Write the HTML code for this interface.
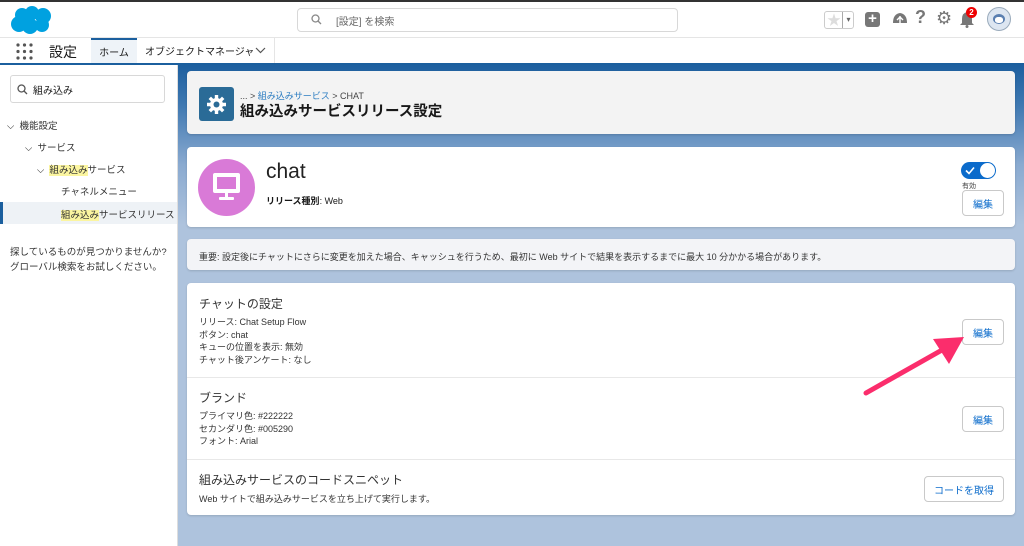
<!DOCTYPE html>
<html><head><meta charset="utf-8"><style>
*{box-sizing:border-box;margin:0;padding:0}
body{width:1024px;height:546px;overflow:hidden;font-family:"Liberation Sans","Noto Sans CJK JP",sans-serif;color:#181818;background:#fff;position:relative;font-size:10px}
.abs{position:absolute}
.btn{position:absolute;background:#fff;border:1px solid #c9c9c9;border-radius:4px;color:#0b6bcb;font-size:10px;display:flex;align-items:center;justify-content:center;height:26px}
.card{position:absolute;left:187px;width:828px;border-radius:4px;box-shadow:0 1px 2px rgba(0,0,0,.15)}
</style></head><body>
<div class="abs" style="left:0;top:0;width:1024px;height:2px;background:#333"></div>
<svg class="abs" style="left:10px;top:5px" width="44" height="30" viewBox="0 0 44 30"><g fill="#00a1e0"><circle cx="12" cy="10" r="7"/><circle cx="22" cy="8" r="7"/><circle cx="33" cy="11" r="8"/><circle cx="9" cy="19" r="8"/><circle cx="20" cy="21" r="8"/><circle cx="32" cy="20" r="7"/></g></svg>
<div class="abs" style="left:297px;top:8px;width:381px;height:24px;border:1px solid #d8d8d8;border-radius:4px;color:#666;font-size:10px;display:flex;align-items:center;padding-left:38px">[設定] を検索</div>
<svg class="abs" style="left:311px;top:14px" width="11" height="11"><circle cx="4.5" cy="4.5" r="3.5" fill="none" stroke="#888" stroke-width="1.3"/><path d="M7 7l3 3" stroke="#888" stroke-width="1.3"/></svg>
<div class="abs" style="left:824px;top:11px;width:30px;height:18px;border:1px solid #ccc;border-radius:3px"><span style="position:absolute;left:2px;top:0;color:#ddd;font-size:14px;line-height:16px">★</span><span style="position:absolute;left:17px;top:0;width:12px;height:16px;border-left:1px solid #aaa;color:#666;font-size:8px;line-height:16px;text-align:center">▾</span></div>
<div class="abs" style="left:865px;top:12px;width:15px;height:15px;border-radius:3px;background:#777;color:#fff;font-size:15px;line-height:14px;text-align:center;font-weight:bold">+</div>
<svg class="abs" style="left:891px;top:11px" width="18" height="16"><path d="M2 12 Q2 3 9 2 Q16 3 16 12 Z" fill="#777"/><path d="M9 5v9M6 9l3-3 3 3" stroke="#fff" stroke-width="1.4" fill="none"/></svg>
<div class="abs" style="left:915px;top:7px;color:#777;font-size:18px;font-weight:bold">?</div>
<div class="abs" style="left:936px;top:8px;color:#777;font-size:18px">⚙</div>
<svg class="abs" style="left:960px;top:11px" width="14" height="17"><path d="M7 1Q2 2 2 8V12L0 14H14L12 12V8Q12 2 7 1Z" fill="#777"/><circle cx="7" cy="15.5" r="1.5" fill="#777"/></svg>
<div class="abs" style="left:966px;top:7px;width:11px;height:11px;border-radius:50%;background:#e00;color:#fff;font-size:8px;line-height:11px;text-align:center;font-weight:bold">2</div>
<div class="abs" style="left:987px;top:7px;width:24px;height:24px;border-radius:50%;background:#dde6f1;border:1px solid #9ab"><div style="position:absolute;left:5px;top:6px;width:12px;height:10px;border-radius:50%;background:#5a7fb0"></div><div style="position:absolute;left:7px;top:9px;width:8px;height:6px;border-radius:40%;background:#fff"></div></div>
<div class="abs" style="left:0;top:37px;width:1024px;height:1px;background:#e5e5e5"></div>
<svg class="abs" style="left:16px;top:43px" width="17" height="17"><g fill="#555"><circle cx="2" cy="2" r="1.6"/><circle cx="8.5" cy="2" r="1.6"/><circle cx="15" cy="2" r="1.6"/><circle cx="2" cy="8.5" r="1.6"/><circle cx="8.5" cy="8.5" r="1.6"/><circle cx="15" cy="8.5" r="1.6"/><circle cx="2" cy="15" r="1.6"/><circle cx="8.5" cy="15" r="1.6"/><circle cx="15" cy="15" r="1.6"/></g></svg>
<div class="abs" style="left:49px;top:42px;font-size:14px">設定</div>
<div class="abs" style="left:91px;top:38px;width:46px;height:25px;background:#eef3f8;border-top:2px solid #1b5f9e;font-size:10px;display:flex;align-items:center;justify-content:center">ホーム</div>
<div class="abs" style="left:145px;top:38px;height:25px;font-size:10px;display:flex;align-items:center">オブジェクトマネージャ</div>
<svg class="abs" style="left:255px;top:47px" width="11" height="8"><path d="M1 1l4.5 4.5L10 1" stroke="#555" fill="none" stroke-width="1.2"/></svg>
<div class="abs" style="left:274px;top:38px;width:1px;height:25px;background:#e5e5e5"></div>
<div class="abs" style="left:0;top:63px;width:1024px;height:2px;background:#1b5f9e"></div>
<div class="abs" style="left:177px;top:65px;width:847px;height:481px;background:linear-gradient(#1d5f9f 0,#3f78b1 40px,#8aaad0 100px,#aec3dd 160px,#aec3dd 100%)"></div>
<div class="abs" style="left:177px;top:65px;width:1px;height:481px;background:#ddd"></div>
<div class="abs" style="left:10px;top:75px;width:155px;height:28px;border:1px solid #d8d8d8;border-radius:3px;font-size:10px;display:flex;align-items:center;padding-left:22px">組み込み</div>
<svg class="abs" style="left:17px;top:84px" width="11" height="11"><circle cx="4.5" cy="4.5" r="3.5" fill="none" stroke="#555" stroke-width="1.3"/><path d="M7 7l3 3" stroke="#555" stroke-width="1.3"/></svg>
<div class="abs" style="left:7px;top:118px;font-size:9.5px;color:#333">⌵&nbsp;&nbsp;機能設定</div>
<div class="abs" style="left:25px;top:140px;font-size:9.5px;color:#333">⌵&nbsp;&nbsp;サービス</div>
<div class="abs" style="left:37px;top:162px;font-size:9.5px;color:#333">⌵&nbsp;&nbsp;<span style="background:#fbf5a0">組み込み</span>サービス</div>
<div class="abs" style="left:61px;top:184px;font-size:9.5px;color:#333">チャネルメニュー</div>
<div class="abs" style="left:0;top:202px;width:177px;height:22px;background:#eef2f6;border-left:3px solid #1b5f9e"></div>
<div class="abs" style="left:61px;top:207px;font-size:9.5px;color:#333"><span style="background:#fbf5a0">組み込み</span>サービスリリース</div>
<div class="abs" style="left:10px;top:245px;font-size:9.5px;color:#333;line-height:15px">探しているものが見つかりませんか?<br>グローバル検索をお試しください。</div>
<div class="card" style="top:71px;height:63px;background:#f3f3f3"></div>
<div class="abs" style="left:199px;top:87px;width:35px;height:34px;border-radius:3px;background:#2a6b97"></div>
<svg class="abs" style="left:206px;top:94px" width="21" height="21" viewBox="0 0 21 21"><g fill="#fff"><circle cx="10.5" cy="10.5" r="6.5"/><g stroke="#fff" stroke-width="3.4"><path d="M10.5 1v19M1 10.5h19M3.8 3.8l13.4 13.4M17.2 3.8L3.8 17.2"/></g></g><circle cx="10.5" cy="10.5" r="3" fill="#2a6b97"/></svg>
<div class="abs" style="left:240px;top:89px;font-size:9px;color:#444">... &gt; <span style="color:#2b7cc1">組み込みサービス</span> &gt; CHAT</div>
<div class="abs" style="left:240px;top:100px;font-size:14.5px;font-weight:bold">組み込みサービスリリース設定</div>
<div class="card" style="top:147px;height:80px;background:#fff"></div>
<div class="abs" style="left:198px;top:159px;width:57px;height:57px;border-radius:50%;background:#d97ad7"></div>
<svg class="abs" style="left:211px;top:172px" width="31" height="31"><rect x="2" y="1" width="27" height="20" rx="2" fill="#fff"/><rect x="6" y="5" width="19" height="12" fill="#d97ad7"/><rect x="14" y="21" width="3" height="5" fill="#fff"/><rect x="8" y="25" width="15" height="3" rx="1" fill="#fff"/></svg>
<div class="abs" style="left:266px;top:160px;font-size:21px;color:#222">chat</div>
<div class="abs" style="left:266px;top:194px;font-size:9px"><b>リリース種別</b>: Web</div>
<div class="abs" style="left:961px;top:162px;width:35px;height:17px;border-radius:9px;background:#0b6bcb"><svg style="position:absolute;left:4px;top:4px" width="10" height="9"><path d="M1 4.5l3 3 5-6" stroke="#fff" stroke-width="1.6" fill="none"/></svg><div style="position:absolute;right:1px;top:1px;width:15px;height:15px;border-radius:50%;background:#fff"></div></div>
<div class="abs" style="left:962px;top:181px;font-size:7px;color:#444">有効</div>
<div class="btn" style="left:962px;top:190px;width:42px">編集</div>
<div class="card" style="top:239px;height:31px;background:#f3f4f7"></div>
<div class="abs" style="left:199px;top:250px;font-size:9px;color:#333">重要: 設定後にチャットにさらに変更を加えた場合、キャッシュを行うため、最初に Web サイトで結果を表示するまでに最大 10 分かかる場合があります。</div>
<div class="card" style="top:283px;height:232px;background:#fff"></div>
<div class="abs" style="left:187px;top:377px;width:828px;height:1px;background:#e8e8e8"></div>
<div class="abs" style="left:187px;top:459px;width:828px;height:1px;background:#e8e8e8"></div>
<div class="abs" style="left:199px;top:295px;font-size:12px;color:#333">チャットの設定</div>
<div class="abs" style="left:199px;top:316px;font-size:9px;color:#333;line-height:12.5px">リリース: Chat Setup Flow<br>ボタン: chat<br>キューの位置を表示: 無効<br>チャット後アンケート: なし</div>
<div class="btn" style="left:962px;top:319px;width:42px">編集</div>
<div class="abs" style="left:199px;top:389px;font-size:12px;color:#333">ブランド</div>
<div class="abs" style="left:199px;top:410px;font-size:9px;color:#333;line-height:12.5px">プライマリ色: #222222<br>セカンダリ色: #005290<br>フォント: Arial</div>
<div class="btn" style="left:962px;top:406px;width:42px">編集</div>
<div class="abs" style="left:199px;top:471px;font-size:12px;color:#333">組み込みサービスのコードスニペット</div>
<div class="abs" style="left:199px;top:492px;font-size:9px;color:#333">Web サイトで組み込みサービスを立ち上げて実行します。</div>
<div class="btn" style="left:924px;top:476px;width:80px">コードを取得</div>
<svg class="abs" style="left:860px;top:330px" width="110" height="70"><path d="M6 63L82 20" stroke="#fb2d6c" stroke-width="5" stroke-linecap="round"/><path d="M104 7L73 9L89 34Z" fill="#fb2d6c"/></svg>
</body></html>
